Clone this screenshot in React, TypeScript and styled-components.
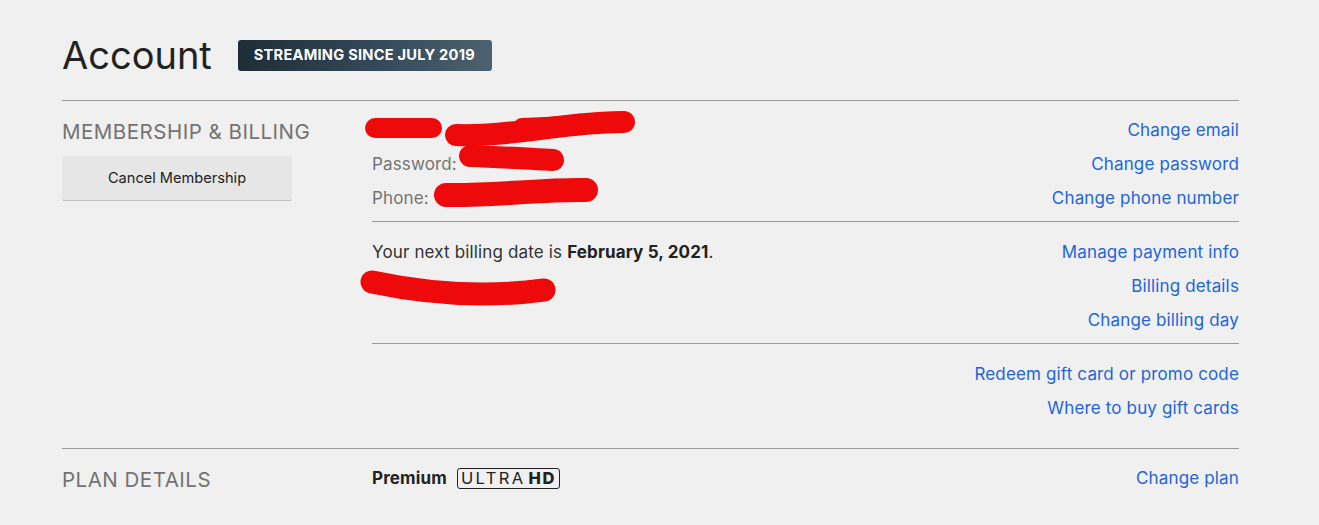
import React from "react";
import styled, { createGlobalStyle } from "styled-components";

const GlobalStyle = createGlobalStyle`
  body {
    margin: 0;
    background: #f0f0f0;
    font-family: Inter, "Noto Sans", "Liberation Sans", sans-serif;
    color: #333;
  }
`;

const Page = styled.div`
  margin-left: 62px;
  width: 1177px;
`;

const Header = styled.div`
  display: flex;
  align-items: center;
  gap: 26px;
  height: 46px;
  padding-top: 32px;
  margin-bottom: 22px;
`;

const Title = styled.h1`
  margin: 0;
  font-size: 38px;
  font-weight: 400;
  line-height: 46px;
  color: #222;
`;

const SinceBadge = styled.div`
  height: 31px;
  padding: 0 17px 0 16px;
  display: flex;
  align-items: center;
  border-radius: 3px;
  background: linear-gradient(90deg, #1e2d38 0%, #34495a 55%, #4d626f 100%);
  color: #fff;
  font-size: 14.6px;
  font-weight: 700;
  letter-spacing: 0.25px;
  text-transform: uppercase;
`;

const Section = styled.section`
  display: grid;
  grid-template-columns: 310px 1fr;
  border-top: 1px solid #999;
`;

const SideCol = styled.div`
  padding-top: 17px;
`;

const SectionHeading = styled.h2`
  margin: 0;
  font-size: 20.5px;
  letter-spacing: 0.5px;
  line-height: 28px;
  font-weight: 400;
  color: #737373;
`;

const CancelButton = styled.button`
  margin-top: 10px;
  width: 230px;
  height: 44px;
  border: none;
  border-radius: 2px;
  background: #e6e6e6;
  box-shadow: 0 1px 0 rgba(0, 0, 0, 0.2);
  font-family: inherit;
  font-size: 14.6px;
  color: #222;
  cursor: pointer;
`;

const MainCol = styled.div`
  display: flex;
  flex-direction: column;
`;

const Group = styled.div<{ $last?: boolean }>`
  padding: 12px 0 ${(p) => (p.$last ? "23px" : "6px")};
  & + & {
    border-top: 1px solid #999;
    padding-top: 13px;
  }
`;

const Row = styled.div`
  height: 34px;
  display: flex;
  align-items: center;
  justify-content: space-between;
  font-size: 17px;
  letter-spacing: 0.15px;
`;

const Info = styled.div<{ $muted?: boolean }>`
  display: flex;
  align-items: center;
  height: 34px;
  color: ${(p) => (p.$muted ? "#737373" : "#333")};
  white-space: pre;
`;

const Link = styled.a`
  color: #1f64d9;
  text-decoration: none;
  cursor: pointer;
`;

const Strong = styled.b`
  font-weight: 700;
  color: #222;
`;

const PlanName = styled.span`
  font-weight: 700;
  color: #222;
  margin-right: 10px;
`;

const QualityBadge = styled.span`
  display: inline-flex;
  align-items: center;
  box-sizing: border-box;
  height: 21px;
  padding: 0 3px 0 3px;
  border: 1.5px solid #222;
  border-radius: 3px;
  font-size: 16.5px;
  letter-spacing: 2.4px;
  color: #222;
  b {
    margin-left: 3px;
    font-weight: 800;
    letter-spacing: 1.5px;
  }
`;

const Scribble = styled.svg`
  overflow: visible;
  flex-shrink: 0;
`;

const Redacted: React.FC<{ w: number; strokes: { d: string; sw: number }[] }> = ({ w, strokes }) => (
  <Scribble width={w} height={34} viewBox={`0 0 ${w} 34`}>
    {strokes.map((s, i) => (
      <path key={i} d={s.d} stroke="#ee0a0a" strokeWidth={s.sw} strokeLinecap="round" strokeLinejoin="round" fill="none" />
    ))}
  </Scribble>
);

export default function App() {
  return (
    <>
      <GlobalStyle />
      <Page>
        <Header>
          <Title>Account</Title>
          <SinceBadge>Streaming since July 2019</SinceBadge>
        </Header>

        <Section>
          <SideCol>
            <SectionHeading>MEMBERSHIP &amp; BILLING</SectionHeading>
            <CancelButton>Cancel Membership</CancelButton>
          </SideCol>
          <MainCol>
            <Group>
              <Row>
                <Info>
                  <Redacted
                    w={260}
                    strokes={[
                      { d: "M3 15 L60 15", sw: 20 },
                      { d: "M84 22 C 140 24, 200 8, 252 9", sw: 22 },
                      { d: "M150 14 L245 10", sw: 18 },
                    ]}
                  />
                </Info>
                <Link>Change email</Link>
              </Row>
              <Row>
                <Info $muted>
                  {"Password: "}
                  <Redacted w={100} strokes={[{ d: "M8 9 C 40 10, 70 12, 91 13", sw: 22 }]} />
                </Info>
                <Link>Change password</Link>
              </Row>
              <Row>
                <Info $muted>
                  {"Phone: "}
                  <Redacted w={165} strokes={[{ d: "M12 14 C 60 15, 110 8, 152 9", sw: 24 }]} />
                </Info>
                <Link>Change phone number</Link>
              </Row>
            </Group>

            <Group>
              <Row>
                <Info>
                  Your next billing date is <Strong>February 5, 2021</Strong>.
                </Info>
                <Link>Manage payment info</Link>
              </Row>
              <Row>
                <Info>
                  <Redacted w={175} strokes={[{ d: "M0 13 Q 90 32 172 21", sw: 23 }]} />
                </Info>
                <Link>Billing details</Link>
              </Row>
              <Row>
                <Info />
                <Link>Change billing day</Link>
              </Row>
            </Group>

            <Group $last>
              <Row>
                <Info />
                <Link>Redeem gift card or promo code</Link>
              </Row>
              <Row>
                <Info />
                <Link>Where to buy gift cards</Link>
              </Row>
            </Group>
          </MainCol>
        </Section>

        <Section>
          <SideCol>
            <SectionHeading>PLAN DETAILS</SectionHeading>
          </SideCol>
          <MainCol>
            <Group>
              <Row>
                <Info>
                  <PlanName>Premium</PlanName>
                  <QualityBadge>
                    ULTRA<b>HD</b>
                  </QualityBadge>
                </Info>
                <Link>Change plan</Link>
              </Row>
            </Group>
          </MainCol>
        </Section>
      </Page>
    </>
  );
}
